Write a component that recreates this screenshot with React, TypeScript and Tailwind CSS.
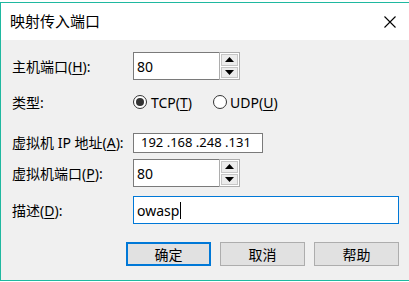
import React from 'react';

const latin = "font-['Noto_Sans','Noto_Sans_CJK_SC',sans-serif]";

const Mn: React.FC<{ k: string }> = ({ k }) => (
  <span>
    (<span className="underline underline-offset-2">{k}</span>)
  </span>
);

const Label: React.FC<{ text: string; k: string }> = ({ text, k }) => (
  <div className="w-[121px] shrink-0 text-[14px] text-black whitespace-nowrap">
    {text}
    <Mn k={k} />:
  </div>
);

const Tri: React.FC<{ up?: boolean }> = ({ up }) => (
  <svg width="9" height="5" viewBox="0 0 9 5">
    {up ? <path d="M0 5 L4.5 0 L9 5 Z" fill="#000" /> : <path d="M0 0 L4.5 5 L9 0 Z" fill="#000" />}
  </svg>
);

const Spin: React.FC<{ value: string }> = ({ value }) => (
  <div className="flex h-[28px] w-[107px]">
    <div className="flex flex-1 items-center border border-r-0 border-[#7a7a7a] bg-white pl-[3px] text-[14px]">
      {value}
    </div>
    <div className="flex w-[21px] flex-col border border-[#adadad] bg-white p-[1px] gap-[1px]">
      <div className="flex flex-1 items-center justify-center border border-[#c6c6c6] bg-[#ececec]">
        <Tri up />
      </div>
      <div className="flex flex-1 items-center justify-center border border-[#c6c6c6] bg-[#ececec]">
        <Tri />
      </div>
    </div>
  </div>
);

const Radio: React.FC<{ checked?: boolean }> = ({ checked }) => (
  <div className="flex h-[14px] w-[14px] items-center justify-center rounded-full border border-[#333] bg-white">
    {checked && <div className="h-[8px] w-[8px] rounded-full bg-[#333]" />}
  </div>
);

export default function App() {
  return (
    <div className={`h-[282px] w-[409px] overflow-hidden bg-white ${latin}`}>
      <div className="h-[2px] bg-white" />
      <div className="flex h-[279px] flex-col border-l border-t border-b border-[#1fb8a0]">
        <div className="flex h-[37px] items-center justify-between bg-white pl-[9px] pr-[13px]">
          <span className="text-[15px] text-black">映射传入端口</span>
          <svg width="12" height="12" viewBox="0 0 12 12">
            <path d="M0.5 0.5 L11.5 11.5 M11.5 0.5 L0.5 11.5" stroke="#000" strokeWidth="1.1" />
          </svg>
        </div>
        <div className="flex flex-1 flex-col bg-[#f0f0f0] pl-[11px] pt-[12px]">
          <div className="flex items-center">
            <Label text="主机端口" k="H" />
            <Spin value="80" />
          </div>
          <div className="mt-[15px] flex h-[14px] items-center text-[14px]">
            <div className="w-[121px]">类型:</div>
            <Radio checked />
            <span className="ml-[4px] w-[62px]">
              TCP<Mn k="T" />
            </span>
            <Radio />
            <span className="ml-[3px]">
              UDP<Mn k="U" />
            </span>
          </div>
          <div className="mt-[23px] flex items-center">
            <Label text="虚拟机 IP 地址" k="A" />
            <div className="flex h-[20px] w-[130px] items-center whitespace-nowrap border border-[#7a7a7a] bg-white pl-[7px] text-[13px]">
              192 .168 .248 .131
            </div>
          </div>
          <div className="mt-[6px] flex items-center">
            <Label text="虚拟机端口" k="P" />
            <Spin value="80" />
          </div>
          <div className="mt-[9px] flex items-center">
            <Label text="描述" k="D" />
            <div className="flex h-[28px] w-[266px] items-center border border-[#0078d7] bg-white pl-[3px] text-[14px]">
              owasp<span className="ml-[1px] h-[17px] w-[1px] bg-black" />
            </div>
          </div>
          <div className="mt-[18px] flex gap-[9px] pl-[114px] text-[14px]">
            <button className="flex h-[24px] w-[85px] items-center justify-center border-2 border-[#0078d7] bg-[#e1e1e1]">
              确定
            </button>
            <button className="flex h-[24px] w-[85px] items-center justify-center border border-[#adadad] bg-[#e1e1e1]">
              取消
            </button>
            <button className="flex h-[24px] w-[85px] items-center justify-center border border-[#adadad] bg-[#e1e1e1]">
              帮助
            </button>
          </div>
        </div>
      </div>
    </div>
  );
}
